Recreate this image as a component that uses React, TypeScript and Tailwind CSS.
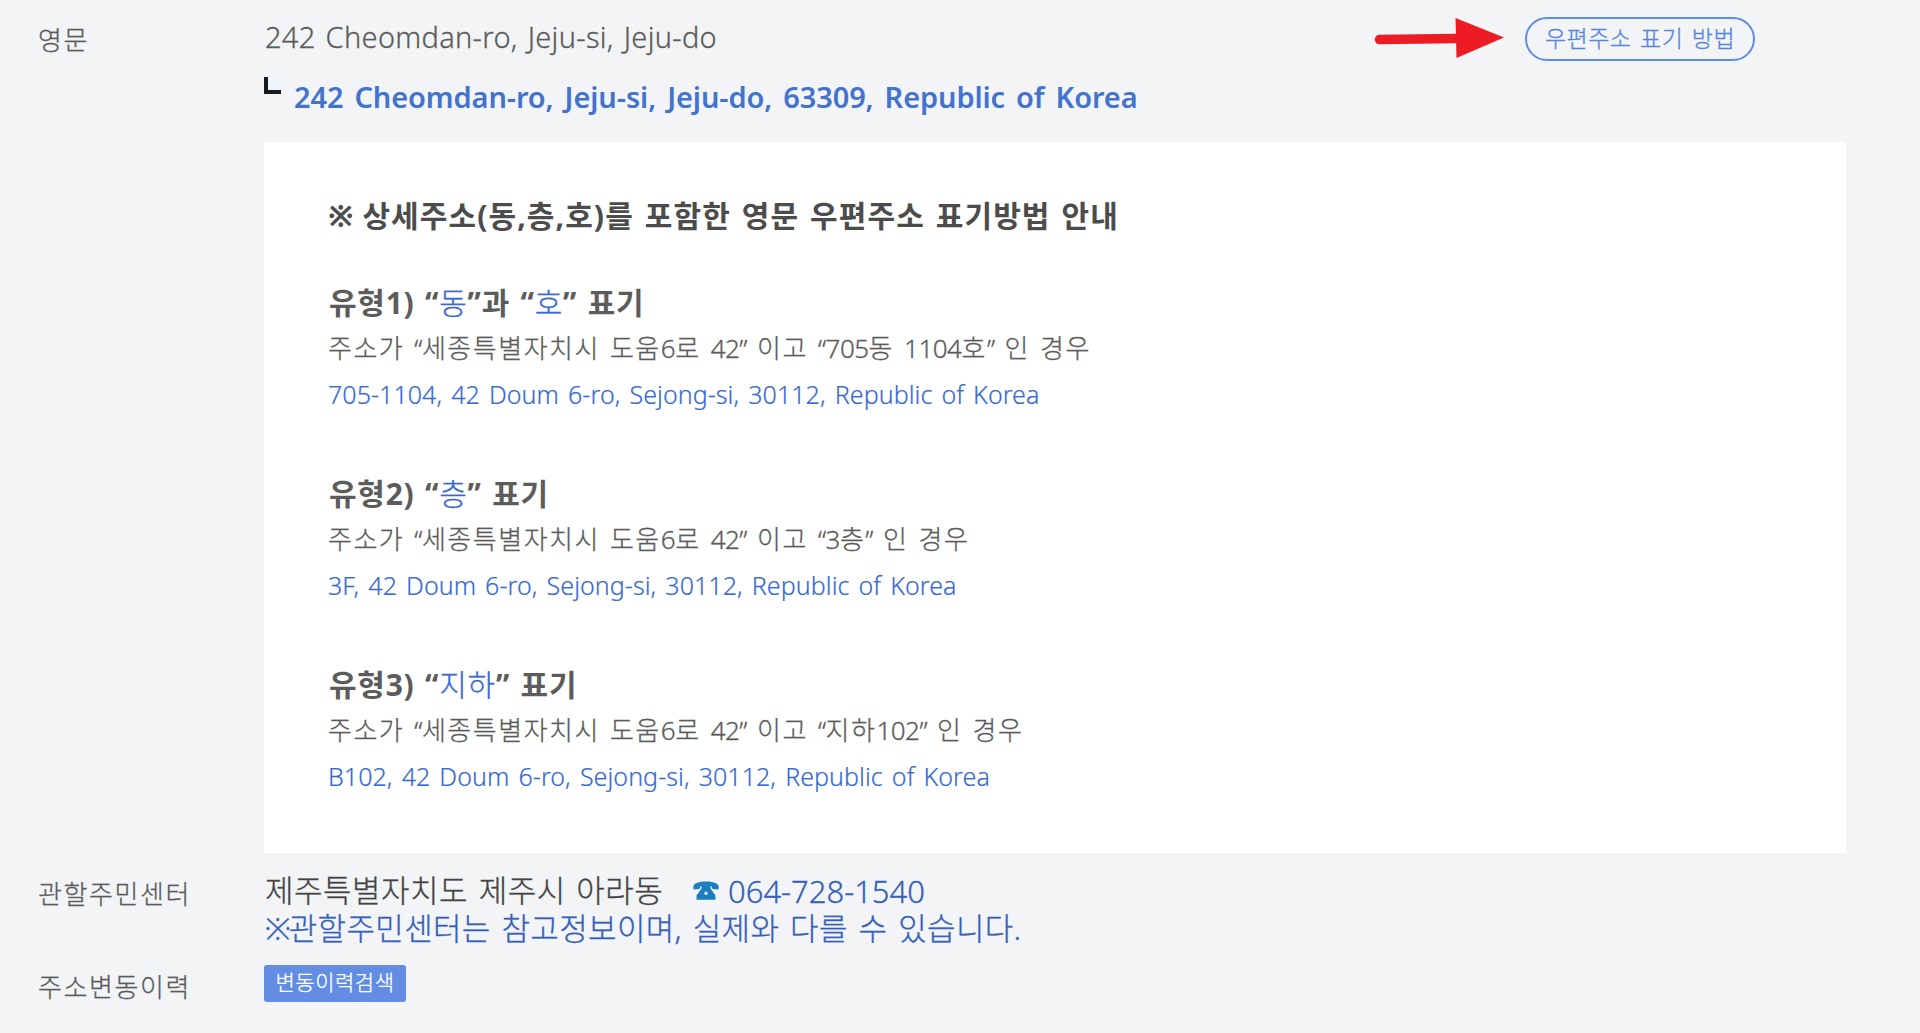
import type { ReactNode } from "react";

const Blue = ({ children }: { children: ReactNode }) => (
  <span className="font-light text-[#3769d4] [-webkit-text-stroke:0.3px]">{children}</span>
);

const guides = [
  {
    title: (
      <>
        유형1) “<Blue>동</Blue>”과 “<Blue>호</Blue>” 표기
      </>
    ),
    desc: "주소가 “세종특별자치시 도움6로 42” 이고 “705동 1104호” 인 경우",
    example: "705-1104, 42 Doum 6-ro, Sejong-si, 30112, Republic of Korea",
  },
  {
    title: (
      <>
        유형2) “<Blue>층</Blue>” 표기
      </>
    ),
    desc: "주소가 “세종특별자치시 도움6로 42” 이고 “3층” 인 경우",
    example: "3F, 42 Doum 6-ro, Sejong-si, 30112, Republic of Korea",
  },
  {
    title: (
      <>
        유형3) “<Blue>지하</Blue>” 표기
      </>
    ),
    desc: "주소가 “세종특별자치시 도움6로 42” 이고 “지하102” 인 경우",
    example: "B102, 42 Doum 6-ro, Sejong-si, 30112, Republic of Korea",
  },
];

// digits and quotes sit tighter than the hangul around them
function Mixed({ text }: { text: string }) {
  return (
    <>
      {text.split(/([0-9“”]+)/).map((part, i) =>
        i % 2 ? (
          <span key={i} className="tracking-[-0.5px]">
            {part}
          </span>
        ) : (
          part
        )
      )}
    </>
  );
}

function Label({ children }: { children: ReactNode }) {
  return (
    <div className="w-[264px] shrink-0 pl-[38px] pt-[3px] text-[26px] leading-10 tracking-[1.6px] text-[#5c5c5c] [-webkit-text-stroke:0.3px]">
      {children}
    </div>
  );
}

function Arrow() {
  return (
    <svg width="132" height="44" viewBox="0 0 132 44" fill="none">
      <path d="M6.5 22.5L84 21.5" stroke="#ed1c24" strokeWidth="9.5" strokeLinecap="round" />
      <path d="M82.5 1L131 20.5L83.5 41Z" fill="#ed1c24" />
    </svg>
  );
}

function Phone() {
  return (
    <svg width="26" height="19" viewBox="0 0 26 19" fill="#1a7fc2">
      <path d="M0.3 7.2V5.2C1.5 2 6 0.5 13 0.5S24.5 2 25.7 5.2V7.2C25.7 8 25.2 8.4 24.5 8.4L19.8 7.9C19.2 7.8 18.9 7.4 18.9 6.8V5.4C15 4.6 11 4.6 7.1 5.4V6.8C7.1 7.4 6.8 7.8 6.2 7.9L1.5 8.4C0.8 8.4 0.3 8 0.3 7.2Z" />
      <path d="M8.5 4.8H17.5V7.5L22.5 14.5V18.7H3.5V14.5L8.5 7.5Z" />
      <circle cx="13" cy="12.3" r="1.7" fill="#d8eaf6" />
    </svg>
  );
}

export default function App() {
  return (
    <main className="h-[1033px] w-[1920px] overflow-hidden whitespace-nowrap bg-[#f2f4f6] pt-[17px] font-['Noto_Sans','Noto_Sans_CJK_KR',sans-serif] font-light">
      {/* English address */}
      <section className="flex">
        <Label>영문</Label>
        <div className="w-[1582px]">
          <div className="flex h-[60px] items-start">
            <p className="w-[1109px] pl-px text-[29px] leading-10 tracking-[0.3px] text-[#5c5c5c] [-webkit-text-stroke:0.3px] [word-spacing:2.2px]">
              242 Cheomdan-ro, Jeju-si, Jeju-do
            </p>
            <Arrow />
            <button className="ml-5 flex h-11 w-[230px] items-center justify-center rounded-full border-2 border-[#5f8ce6] pb-0.5 text-[23px] tracking-[0.5px] text-[#5583e2] [-webkit-text-stroke:0.3px] [word-spacing:2px]">
              우편주소 표기 방법
            </button>
          </div>
          <div className="flex h-[65px]">
            <span className="h-[17px] w-[17px] border-b-4 border-l-4 border-[#1a1a1a] bg-[#eef5fc]" />
            <p className="ml-[13px] text-[29px] font-semibold leading-10 tracking-[-0.12px] text-[#4473cd] [word-spacing:3.6px]">
              242 Cheomdan-ro, Jeju-si, Jeju-do, 63309, Republic of Korea
            </p>
          </div>

          <div className="flex h-[711px] flex-col bg-white pl-16 pt-[52px]">
            <h2 className="mb-[43px] text-[30px] font-bold leading-[44px] tracking-[1.1px] text-[#4c4c4c] [word-spacing:2px]">
              <span className="tracking-[-2px]">※</span> 상세주소(동,층,호)를 포함한 영문 우편주소 표기방법 안내
            </h2>
            <div className="flex flex-col gap-[54px]">
              {guides.map((g) => (
                <div key={g.example}>
                  <h3 className="pl-px text-[30px] font-bold leading-[44px] tracking-[0.75px] text-[#5c5c5c] [word-spacing:2px]">
                    {g.title}
                  </h3>
                  <p className="text-[26px] leading-[46px] tracking-[1.5px] text-[#5c5c5c] [-webkit-text-stroke:0.3px] [word-spacing:1.8px]">
                    <Mixed text={g.desc} />
                  </p>
                  <p className="mb-px text-[25px] font-[350] leading-[46px] tracking-[0.06px] text-[#3769d4] [-webkit-text-stroke:0.2px] [word-spacing:2.5px]">
                    {g.example}
                  </p>
                </div>
              ))}
            </div>
          </div>
        </div>
      </section>

      {/* Community center */}
      <section className="flex pt-[18px]">
        <Label>관할주민센터</Label>
        <div className="pl-px text-[31px] leading-[38px] text-[#3660b9] [-webkit-text-stroke:0.3px]">
          <p className="flex h-[38px]">
            <span className="w-[428px] tracking-[0.5px] text-[#444] [word-spacing:2px]">제주특별자치도 제주시 아라동</span>
            <span className="flex items-center gap-[9px]">
              <Phone />
              <span className="pt-0.5 leading-[34px]">064-728-1540</span>
            </span>
          </p>
          <p className="tracking-[0.33px] [word-spacing:2.4px]">
            <span className="tracking-[-2px]">※</span>관할주민센터는 참고정보이며, 실제와 다를 수 있습니다.
          </p>
        </div>
      </section>

      {/* Change history */}
      <section className="flex pt-[17px]">
        <Label>주소변동이력</Label>
        <button className="mt-px flex h-[37px] w-[142px] items-center justify-center rounded-[3px] bg-[#628de3] pb-0.5 text-[21px] tracking-[0.5px] text-white [-webkit-text-stroke:0.3px]">
          변동이력검색
        </button>
      </section>
    </main>
  );
}
